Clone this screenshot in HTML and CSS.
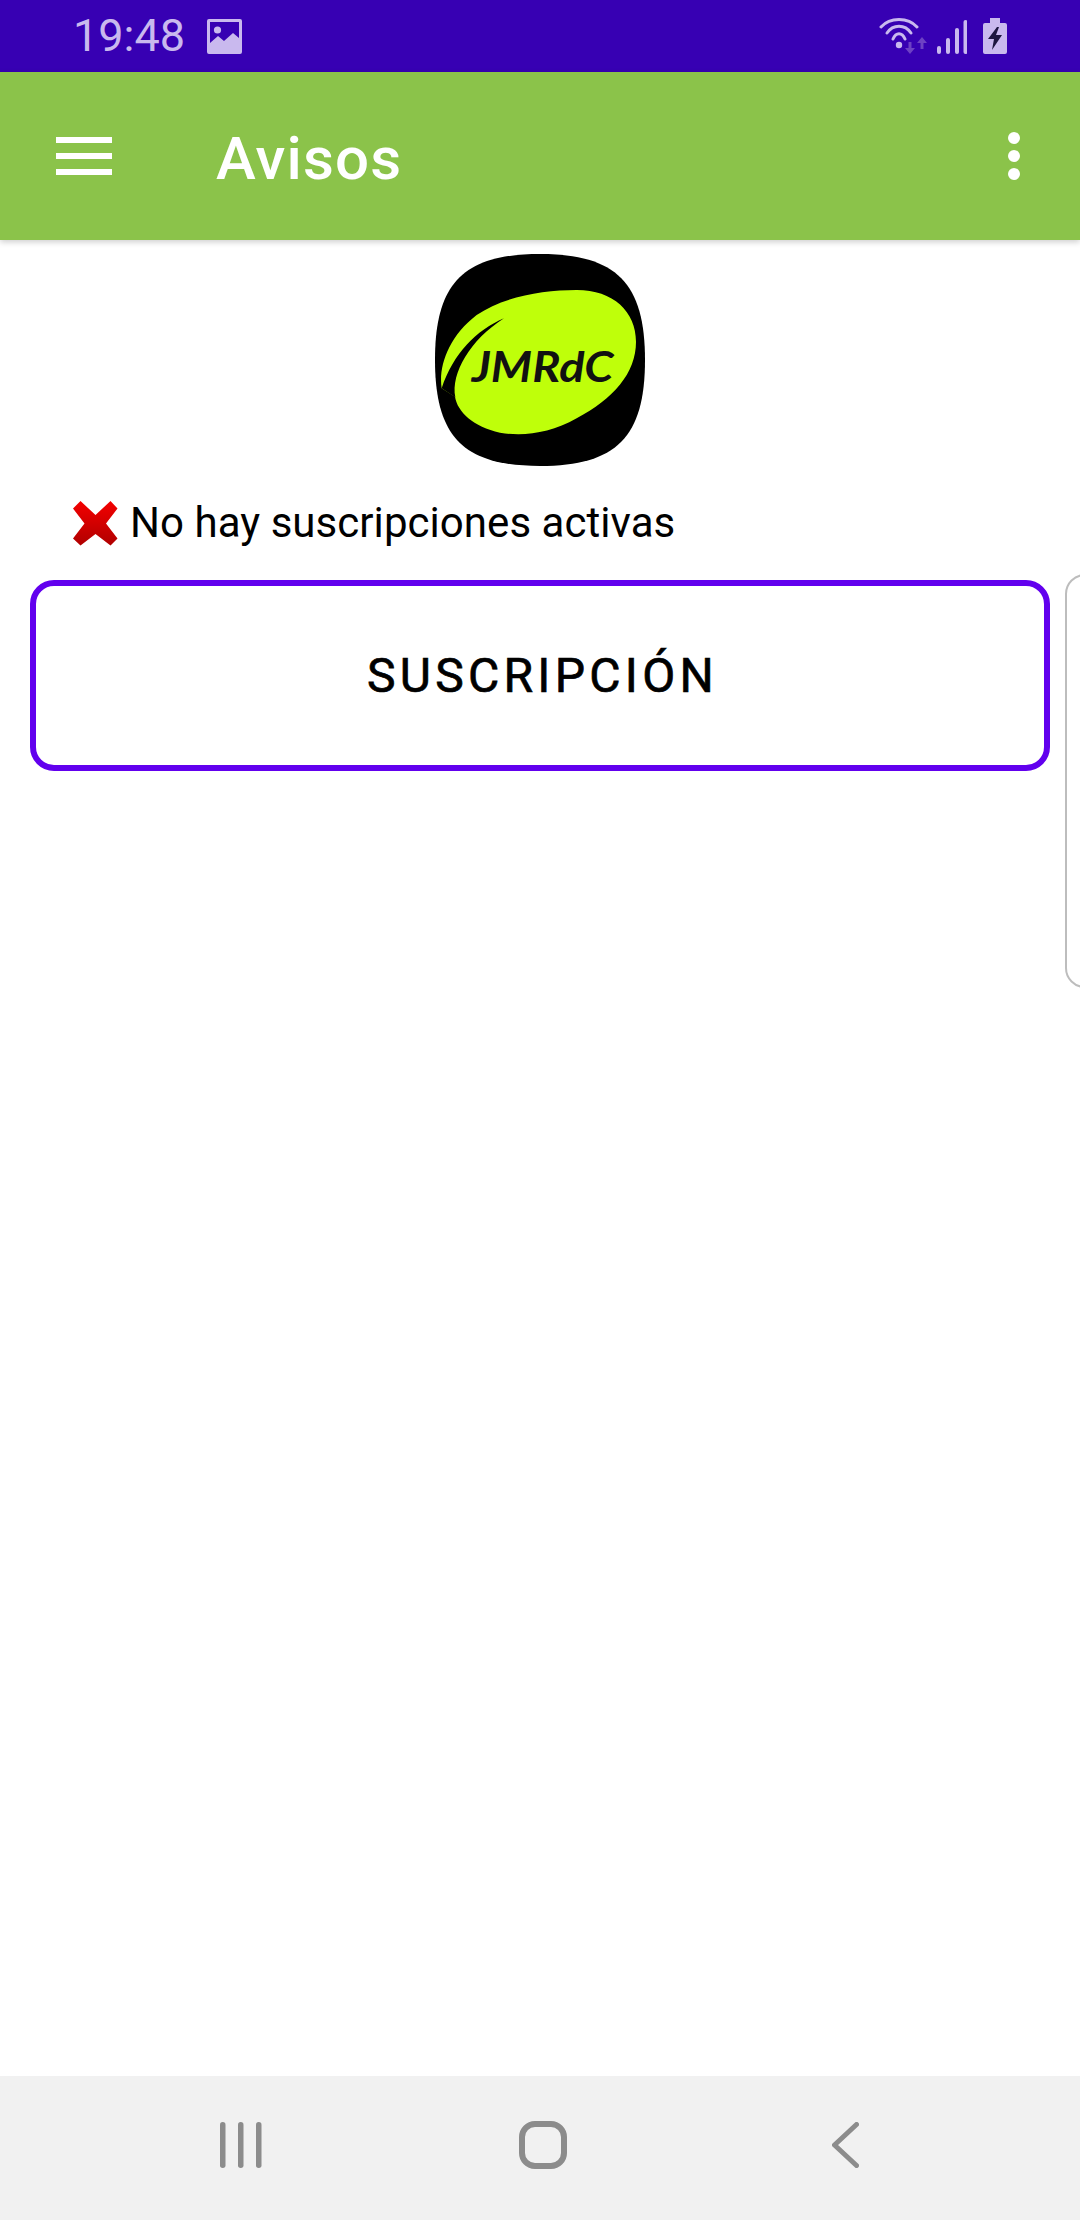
FILE: index.html
```html
<!DOCTYPE html>
<html lang="es">
<head>
<meta charset="utf-8">
<title>Avisos</title>
<link rel="stylesheet" href="styles.css">
</head>
<body>
<div class="screen">
  <header class="statusbar">
    <span class="clock">19:48</span>
    <svg class="st-img" viewBox="0 0 35 35"><path fill="#c9b9ee" fill-rule="evenodd" d="M2 0h31a2 2 0 0 1 2 2v31a2 2 0 0 1-2 2H2a2 2 0 0 1-2-2V2a2 2 0 0 1 2-2zM3 3v21l8-7 6 5 9-8 6 5V3z"/><circle cx="10.500" cy="11" r="3.600" fill="#c9b9ee"/></svg>
    <span class="spacer"></span>
    <svg class="st-wifi" viewBox="0 0 48 36">
      <g fill="none" stroke="#c9b9ee" stroke-width="3" stroke-linecap="round">
        <path d="M2 9C11 -1 29 -1 38 9"/>
        <path d="M8 15C14 6 26 6 32 15"/>
        <path d="M14 21C17 14 23 14 26 21"/>
      </g>
      <circle cx="20" cy="27" r="3.200" fill="#c9b9ee"/>
      <g fill="#6d41c4">
        <path d="M29.500 24h3v6h3.500l-5 6-5-6h3.500z"/>
        <path d="M43 19l5 6h-3.500v6h-3v-6H38z"/>
      </g>
    </svg>
    <svg class="st-signal" viewBox="0 0 30 34"><g fill="#c9b9ee"><rect x="0" y="26" width="4" height="8" rx="2"/><rect x="9" y="18" width="4" height="16" rx="2"/><rect x="18" y="8" width="4" height="26" rx="2"/><rect x="26.500" y="0" width="4" height="34" rx="2"/></g></svg>
    <svg class="st-batt" viewBox="0 0 24 36"><path fill="#c9b9ee" d="M7 0h10v5h5a2 2 0 0 1 2 2v27a2 2 0 0 1-2 2H2a2 2 0 0 1-2-2V7a2 2 0 0 1 2-2h5z"/><path fill="#1d1640" d="M14 9 5 21h6l-2 11 10-15h-6l3-8z"/></svg>
  </header>

  <div class="toolbar">
    <div class="menu-icon"><span></span><span></span><span></span></div>
    <h1 class="title">Avisos</h1>
    <div class="more-icon"><span></span><span></span><span></span></div>
  </div>

  <main class="content">
    <div class="logo-wrap">
      <svg class="logo" viewBox="72 42 636 636">
        <path fill="#000" d="M390 42C620 42 705 130 705 360C705 590 620 678 390 678C160 678 75 590 75 360C75 130 160 42 390 42Z"/>
        <path fill="#bfff0a" d="M95 445C85 380 115 290 200 225C280 170 400 150 500 150C610 150 678 215 678 305C678 400 610 475 500 535C420 580 340 590 270 578C190 560 142 515 135 470Z"/>
        <path fill="#000" d="M282 235C200 270 130 340 95 445L136 472C122 400 180 300 282 235Z"/>
        <text class="logo-text" x="185" y="425" textLength="425" lengthAdjust="spacingAndGlyphs">JMRdC</text>
      </svg>
    </div>

    <div class="message">
      <svg class="cross" viewBox="0 0 45 45">
        <defs><linearGradient id="red" x1="0" y1="0" x2="0" y2="1"><stop offset="0" stop-color="#f40000"/><stop offset="1" stop-color="#b00000"/></linearGradient></defs>
        <path fill="url(#red)" d="M7.500 0 22.500 14 37.500 0 44.500 7.500 33 22.500 44.500 37.500 37.500 44.500 22.500 33 7.500 44.500 0 37.500 11.500 22.500 0 7.500Z"/>
      </svg>
      <span class="message-text">No hay suscripciones activas</span>
    </div>

    <div class="pager">
      <button class="sub-btn">SUSCRIPCIÓN</button>
      <div class="next-card"></div>
    </div>
  </main>

  <nav class="navbar">
    <svg class="nav-recents" viewBox="0 0 42 46"><g fill="#8c8c8c"><rect x="0" y="0" width="5.500" height="46" rx="2.700"/><rect x="18" y="0" width="5.500" height="46" rx="2.700"/><rect x="36" y="0" width="5.500" height="46" rx="2.700"/></g></svg>
    <svg class="nav-home" viewBox="0 0 48 48"><rect x="3" y="3" width="42" height="42" rx="13" fill="none" stroke="#8c8c8c" stroke-width="6"/></svg>
    <svg class="nav-back" viewBox="0 0 27 46"><path d="M24.500 2.500 2.500 23 24.500 43.500" fill="none" stroke="#8c8c8c" stroke-width="5" stroke-linecap="round" stroke-linejoin="round"/></svg>
  </nav>
</div>
</body>
</html>
```

FILE: styles.css
```css
* { box-sizing: border-box; }
html, body { margin: 0; padding: 0; background: #fff; }
.screen {
  width: 1080px;
  height: 2220px;
  display: flex;
  flex-direction: column;
  overflow: hidden;
  font-family: Roboto, "Liberation Sans", sans-serif;
}
.statusbar {
  height: 72px;
  flex: none;
  background: #3700b3;
  display: flex;
  align-items: center;
  padding: 0 73px 0 73px;
}
.clock { font-size: 45px; color: #c9b9ee; line-height: 72px; width: 134px; margin-top: -1px; }
.st-img { width: 35px; height: 35px; }
.spacer { flex: 1; }
.st-wifi { width: 48px; height: 36px; margin-right: 10px; }
.st-signal { width: 30px; height: 34px; margin-right: 16px; margin-top: 2px; }
.st-batt { width: 24px; height: 36px; }

.toolbar {
  height: 168px;
  flex: none;
  background: #8bc34a;
  display: flex;
  align-items: center;
  padding: 0 0 0 56px;
  box-shadow: 0 2px 6px rgba(0,0,0,.2);
  position: relative;
}
.menu-icon { width: 56px; display: flex; flex-direction: column; gap: 10px; }
.menu-icon span { height: 6px; background: #fff; }
.title { margin: 5px 0 0 104px; font-size: 60px; font-weight: 500; letter-spacing: 1.2px; color: #fff; flex: 1; line-height: 1; }
.more-icon { width: 12px; margin-right: 60px; display: flex; flex-direction: column; gap: 6px; }
.more-icon span { height: 12px; border-radius: 50%; background: #fff; }

.content { flex: 1; min-height: 0; display: flex; flex-direction: column; }
.logo-wrap { display: flex; justify-content: center; padding-top: 14px; }
.logo { width: 212px; height: 212px; display: block; }
.logo-text { font-family: Lato, sans-serif; font-style: italic; font-weight: 700; font-size: 125px; fill: #111; }

.message { display: flex; align-items: center; padding-left: 73px; margin-top: 35px; height: 45px; }
.cross { width: 45px; height: 45px; flex: none; }
.message-text { font-size: 42px; color: #000; margin: -2px 0 0 12px; white-space: nowrap; line-height: 45px; letter-spacing: .05px; }

.pager { display: flex; align-items: flex-start; margin-top: 28px; padding-left: 30px; gap: 15px; }
.sub-btn {
  width: 1020px;
  height: 191px;
  flex: none;
  margin-top: 6px;
  background: #fff;
  border: 6px solid #6200ee;
  border-radius: 24px;
  font-family: Roboto, sans-serif;
  font-size: 48px;
  font-weight: 400;
  -webkit-text-stroke: .7px #000;
  letter-spacing: 4.3px;
  color: #000;
  padding: 0 0 0 5px;
}
.next-card { width: 200px; height: 414px; flex: none; border: 2px solid #bdbdbd; border-radius: 20px; background: #fff; }

.navbar { height: 144px; flex: none; background: #f1f1f1; display: flex; align-items: center; padding: 0 0 6px 220px; }
.nav-recents { width: 42px; height: 46px; }
.nav-home { width: 48px; height: 48px; margin-left: 257px; }
.nav-back { width: 27px; height: 46px; margin-left: 265px; }
```
